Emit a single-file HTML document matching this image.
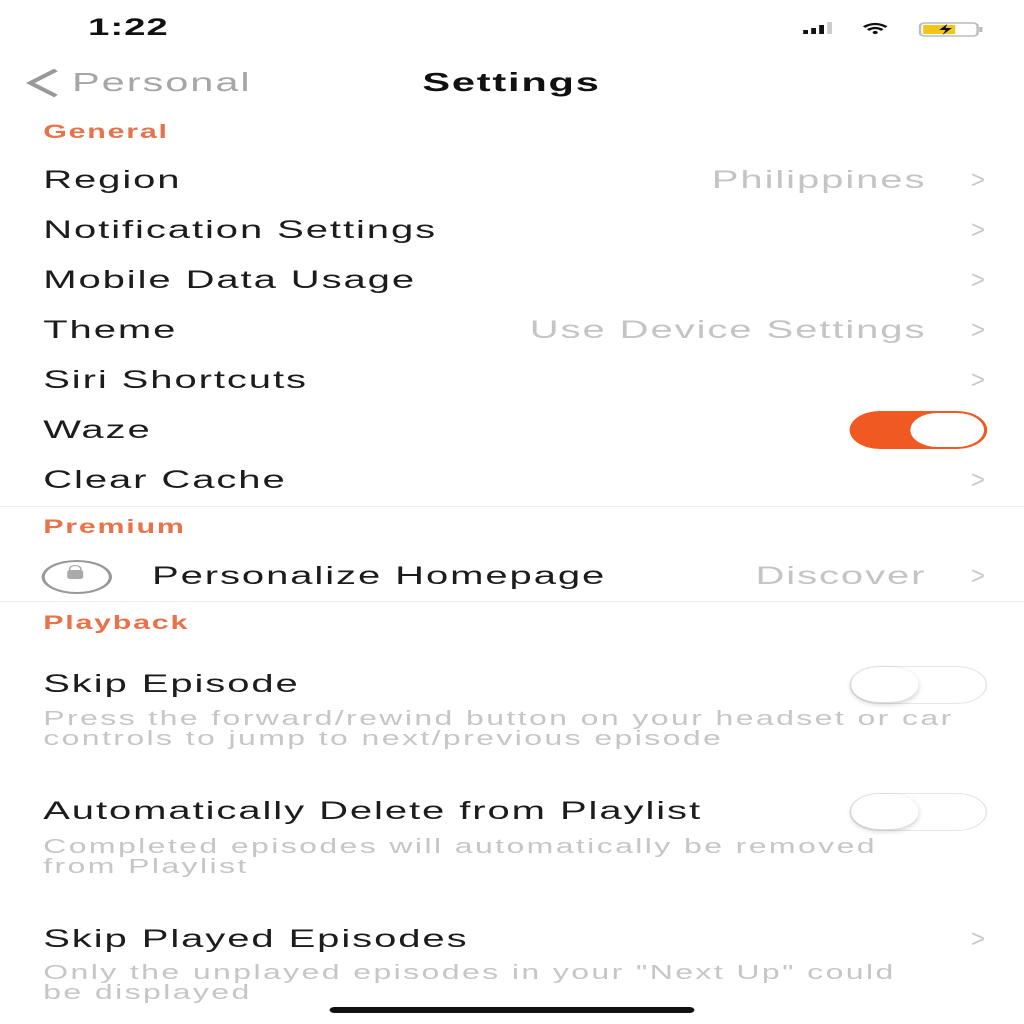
<!DOCTYPE html>
<html><head><meta charset="utf-8"><style>
html,body{margin:0;padding:0;background:#fff;overflow:hidden}
#w{position:absolute;left:0;top:0;width:640px;height:1024px;transform:scaleX(1.6);transform-origin:0 0;font-family:"Liberation Sans",sans-serif}
.t{position:absolute;white-space:nowrap;line-height:30px;height:30px}
.m{left:27px;font-size:25px;color:#1c1c1c;letter-spacing:1.2px}
.v{font-size:25px;color:#c4c4c4;text-align:right;right:61px;letter-spacing:1.2px}
.c{right:24px;font-size:25px;color:#c8c8c8;transform:scaleX(.6);transform-origin:right}
.h{left:27px;font-size:19px;color:#e8734a;font-weight:bold;letter-spacing:1.1px}
.d{left:27px;font-size:20px;color:#c6c6c6;line-height:20px;height:auto;letter-spacing:1.5px}
.sep{position:absolute;left:0;width:640px;height:1px;background:#eeeeee}
.tg{position:absolute;left:531px;width:86px;height:38px;border-radius:20px}
</style></head><body><div id="w">
<div class="t" style="left:55px;top:13px;font-size:24px;font-weight:bold;color:#111;letter-spacing:0.6px">1:22</div>
<svg style="position:absolute;left:500px;top:20px" width="118" height="18" viewBox="0 0 118 18">
<rect x="2" y="10" width="3" height="4" fill="#111"/><rect x="7" y="8" width="3" height="6" fill="#111"/><rect x="12" y="5" width="3" height="9" fill="#111"/><rect x="17" y="2" width="3" height="12" fill="#ccc"/>
<path d="M40 7 Q47 1 54 7" stroke="#111" stroke-width="2.2" fill="none"/><path d="M42.5 10 Q47 6 51.5 10" stroke="#111" stroke-width="2.2" fill="none"/><circle cx="47" cy="12.5" r="1.6" fill="#111"/>
<rect x="75" y="3" width="36" height="13" rx="3" fill="none" stroke="#bbb" stroke-width="1.5"/><rect x="77" y="5" width="20" height="9" fill="#f5c518"/><rect x="112" y="7" width="2" height="5" fill="#bbb"/>
<path d="M92 4 L87 10 L91 10 L89 15 L95 8 L91 8 Z" fill="#111"/></svg>
<svg style="position:absolute;left:15px;top:68px" width="22" height="30" viewBox="0 0 22 30"><path d="M20 2 L4 15 L20 28" stroke="#999" stroke-width="3.5" fill="none"/></svg>
<div class="t" style="left:45px;top:67px;font-size:26px;color:#a6a6a6;letter-spacing:1.2px">Personal</div>
<div class="t" style="left:264px;top:67px;font-size:26px;font-weight:bold;color:#111;letter-spacing:1.1px">Settings</div>
<div class="t h" style="top:118px">General</div>
<div class="t m" style="top:165px">Region</div><div class="t v" style="top:165px">Philippines</div><div class="t c" style="top:165px">&gt;</div>
<div class="t m" style="top:215px">Notification Settings</div><div class="t c" style="top:215px">&gt;</div>
<div class="t m" style="top:265px">Mobile Data Usage</div><div class="t c" style="top:265px">&gt;</div>
<div class="t m" style="top:315px">Theme</div><div class="t v" style="top:315px">Use Device Settings</div><div class="t c" style="top:315px">&gt;</div>
<div class="t m" style="top:365px">Siri Shortcuts</div><div class="t c" style="top:365px">&gt;</div>
<div class="t m" style="top:415px">Waze</div>
<div class="tg" style="top:411px;background:#f05a22"><div style="position:absolute;right:2px;top:2px;width:46px;height:34px;border-radius:17px;background:#fff"></div></div>
<div class="t m" style="top:465px">Clear Cache</div><div class="t c" style="top:465px">&gt;</div>
<div class="sep" style="top:506px"></div>
<div class="t h" style="top:513px">Premium</div>
<div style="position:absolute;left:26px;top:560px;width:40px;height:30px;border:2px solid #999;border-radius:50%"></div>
<div style="position:absolute;left:42px;top:570px;width:10px;height:9px;background:#aaa;border-radius:2px"></div>
<div style="position:absolute;left:43px;top:565px;width:6px;height:6px;border:1.5px solid #aaa;border-bottom:none;border-radius:4px 4px 0 0"></div>
<div class="t m" style="left:95px;top:561px">Personalize Homepage</div><div class="t v" style="top:561px">Discover</div><div class="t c" style="top:561px">&gt;</div>
<div class="sep" style="top:601px"></div>
<div class="t h" style="top:609px">Playback</div>
<div class="t m" style="top:669px">Skip Episode</div>
<div class="tg" style="top:666px;border:1.5px solid #e6e6e6;box-sizing:border-box"><div style="position:absolute;left:0;top:0;width:42px;height:35px;border-radius:18px;background:#fff;box-shadow:0 2px 4px rgba(0,0,0,.2)"></div></div>
<div class="t d" style="top:709px">Press the forward/rewind button on your headset or car<br>controls to jump to next/previous episode</div>
<div class="t m" style="top:796px">Automatically Delete from Playlist</div>
<div class="tg" style="top:793px;border:1.5px solid #e6e6e6;box-sizing:border-box"><div style="position:absolute;left:0;top:0;width:42px;height:35px;border-radius:18px;background:#fff;box-shadow:0 2px 4px rgba(0,0,0,.2)"></div></div>
<div class="t d" style="top:837px">Completed episodes will automatically be removed<br>from Playlist</div>
<div class="t m" style="top:924px">Skip Played Episodes</div><div class="t c" style="top:924px">&gt;</div>
<div class="t d" style="top:963px">Only the unplayed episodes in your "Next Up" could<br>be displayed</div>
<div style="position:absolute;left:206px;top:1007px;width:228px;height:6px;border-radius:3px;background:#111"></div>
</div></body></html>
